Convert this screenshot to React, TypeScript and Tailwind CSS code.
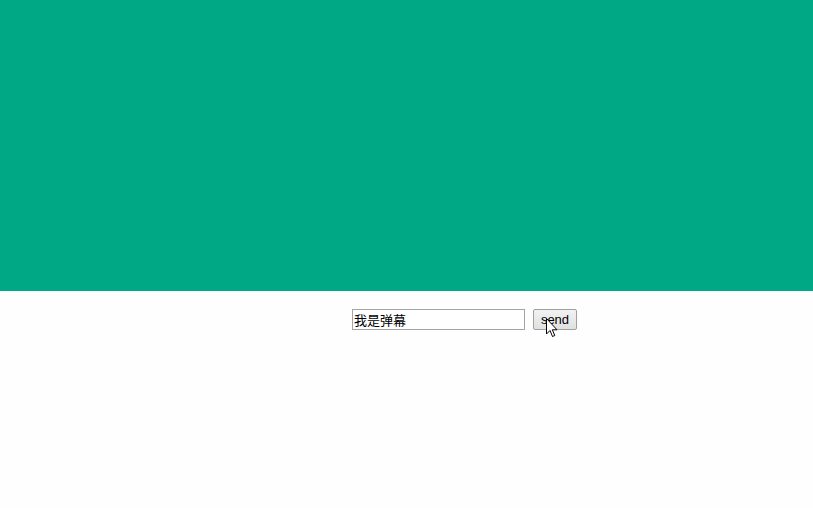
export default function App() {
  return (
    <div className="w-[813px] h-[508px] bg-[#fefefe] font-['Liberation_Sans','Noto_Sans_CJK_SC',sans-serif]">
      <div className="h-[291px] bg-[#00a886]"></div>
      <div className="flex items-center gap-2 pl-[352px] pt-[16px]">
        <input
          type="text"
          defaultValue="我是弹幕"
          className="w-[173px] h-[21px] border border-[#a5a5a5] px-[1px] text-[13px] text-black bg-white outline-none"
        />
        <div className="relative">
          <button className="w-[44px] h-[21px] border border-[#a0a0a0] rounded-[2px] bg-gradient-to-b from-[#f2f2f2] to-[#e0e0e0] text-[13px] text-black leading-none">
            send
          </button>
          <svg
            className="absolute left-[13px] top-[11px]"
            width="13"
            height="21"
            viewBox="0 0 13 21"
          >
            <path
              d="M0.5 0.5 L0.5 16 L4 12.5 L6.5 18.5 L8.8 17.5 L6.3 11.8 L11 11.8 Z"
              fill="#fff"
              stroke="#000"
              strokeWidth="1"
            />
          </svg>
        </div>
      </div>
    </div>
  )
}
